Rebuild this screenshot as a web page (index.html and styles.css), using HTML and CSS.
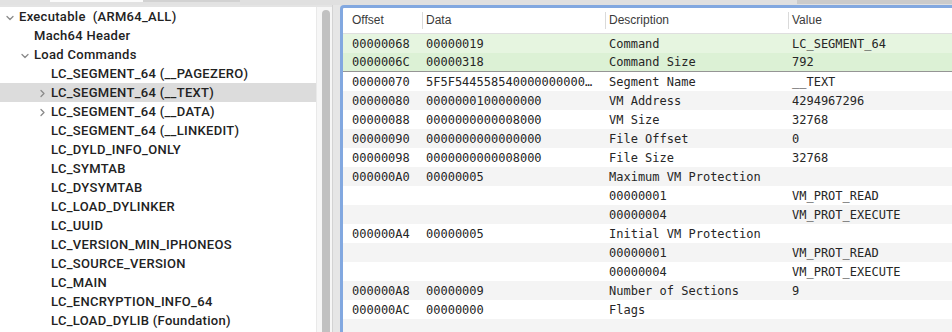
FILE: index.html
```html
<!DOCTYPE html>
<html lang="en">
<head>
<meta charset="utf-8">
<title>MachOView</title>
<link rel="stylesheet" href="styles.css">
</head>
<body>
<div class="window">
  <div class="topstrip">
    <span class="seg seg-a"></span><span class="seg seg-b"></span><span class="seg seg-c"></span><span class="seg seg-d"></span><span class="seg seg-e"></span>
  </div>
  <div class="main">
    <div class="left">
      <div class="tree">
        <div class="node l0"><svg class="chev" viewBox="0 0 13 19"><path d="M1 9.5 L4 12.5 L7 9.5"/></svg><span>Executable&nbsp; (ARM64_ALL)</span></div>
        <div class="node l1"><span class="chev"></span><span>Mach64 Header</span></div>
        <div class="node l1"><svg class="chev" viewBox="0 0 13 19"><path d="M1 9.5 L4 12.5 L7 9.5"/></svg><span>Load Commands</span></div>
        <div class="node l2"><span class="chev"></span><span>LC_SEGMENT_64 (__PAGEZERO)</span></div>
        <div class="node l2 selected"><svg class="chev" viewBox="0 0 13 19"><path d="M3 7.5 L6 10.5 L3 13.5"/></svg><span>LC_SEGMENT_64 (__TEXT)</span></div>
        <div class="node l2"><svg class="chev" viewBox="0 0 13 19"><path d="M3 7.5 L6 10.5 L3 13.5"/></svg><span>LC_SEGMENT_64 (__DATA)</span></div>
        <div class="node l2"><span class="chev"></span><span>LC_SEGMENT_64 (__LINKEDIT)</span></div>
        <div class="node l2"><span class="chev"></span><span>LC_DYLD_INFO_ONLY</span></div>
        <div class="node l2"><span class="chev"></span><span>LC_SYMTAB</span></div>
        <div class="node l2"><span class="chev"></span><span>LC_DYSYMTAB</span></div>
        <div class="node l2"><span class="chev"></span><span>LC_LOAD_DYLINKER</span></div>
        <div class="node l2"><span class="chev"></span><span>LC_UUID</span></div>
        <div class="node l2"><span class="chev"></span><span>LC_VERSION_MIN_IPHONEOS</span></div>
        <div class="node l2"><span class="chev"></span><span>LC_SOURCE_VERSION</span></div>
        <div class="node l2"><span class="chev"></span><span>LC_MAIN</span></div>
        <div class="node l2"><span class="chev"></span><span>LC_ENCRYPTION_INFO_64</span></div>
        <div class="node l2"><span class="chev"></span><span>LC_LOAD_DYLIB (Foundation)</span></div>
      </div>
      <div class="scroll"><div class="thumb"></div></div>
    </div>
    <div class="splitter"></div>
    <div class="right">
      <div class="thead">
        <div class="th c-off">Offset</div>
        <div class="th c-data sep">Data</div>
        <div class="th c-desc sep">Description</div>
        <div class="th c-val sep">Value</div>
      </div>
      <div class="tbody">
        <div class="tr green1"><div class="td c-off">00000068</div><div class="td c-data">00000019</div><div class="td c-desc">Command</div><div class="td c-val">LC_SEGMENT_64</div></div>
        <div class="tr green2"><div class="td c-off">0000006C</div><div class="td c-data">00000318</div><div class="td c-desc">Command Size</div><div class="td c-val">792</div></div>
        <div class="tr"><div class="td c-off">00000070</div><div class="td c-data">5F5F544558540000000000…</div><div class="td c-desc">Segment Name</div><div class="td c-val">__TEXT</div></div>
        <div class="tr alt"><div class="td c-off">00000080</div><div class="td c-data">0000000100000000</div><div class="td c-desc">VM Address</div><div class="td c-val">4294967296</div></div>
        <div class="tr"><div class="td c-off">00000088</div><div class="td c-data">0000000000008000</div><div class="td c-desc">VM Size</div><div class="td c-val">32768</div></div>
        <div class="tr alt"><div class="td c-off">00000090</div><div class="td c-data">0000000000000000</div><div class="td c-desc">File Offset</div><div class="td c-val">0</div></div>
        <div class="tr"><div class="td c-off">00000098</div><div class="td c-data">0000000000008000</div><div class="td c-desc">File Size</div><div class="td c-val">32768</div></div>
        <div class="tr alt"><div class="td c-off">000000A0</div><div class="td c-data">00000005</div><div class="td c-desc">Maximum VM Protection</div><div class="td c-val"></div></div>
        <div class="tr"><div class="td c-off"></div><div class="td c-data"></div><div class="td c-desc">00000001</div><div class="td c-val">VM_PROT_READ</div></div>
        <div class="tr alt"><div class="td c-off"></div><div class="td c-data"></div><div class="td c-desc">00000004</div><div class="td c-val">VM_PROT_EXECUTE</div></div>
        <div class="tr"><div class="td c-off">000000A4</div><div class="td c-data">00000005</div><div class="td c-desc">Initial VM Protection</div><div class="td c-val"></div></div>
        <div class="tr alt"><div class="td c-off"></div><div class="td c-data"></div><div class="td c-desc">00000001</div><div class="td c-val">VM_PROT_READ</div></div>
        <div class="tr"><div class="td c-off"></div><div class="td c-data"></div><div class="td c-desc">00000004</div><div class="td c-val">VM_PROT_EXECUTE</div></div>
        <div class="tr alt"><div class="td c-off">000000A8</div><div class="td c-data">00000009</div><div class="td c-desc">Number of Sections</div><div class="td c-val">9</div></div>
        <div class="tr"><div class="td c-off">000000AC</div><div class="td c-data">00000000</div><div class="td c-desc">Flags</div><div class="td c-val"></div></div>
        <div class="tr alt"><div class="td c-off"></div><div class="td c-data"></div><div class="td c-desc"></div><div class="td c-val"></div></div>
      </div>
    </div>
  </div>
</div>
</body>
</html>
```

FILE: styles.css
```css
html, body {
  margin: 0;
  padding: 0;
}
body {
  width: 952px;
  height: 332px;
  overflow: hidden;
  background: #e4e4e4;
  font-family: "Liberation Sans", Arial, sans-serif;
}
.window {
  display: flex;
  flex-direction: column;
  height: 332px;
}
.topstrip {
  height: 5px;
  display: flex;
  flex: none;
}
.seg { display: block; height: 5px; }
.seg-a { width: 50px; background: #e2e2e2; }
.seg-b { width: 93px; background: linear-gradient(#fbfbfb 0 2px, #e2e2e2 2px); }
.seg-c { width: 97px; background: linear-gradient(#d2d2d2 0 2px, #e2e2e2 2px); }
.seg-d { width: 557px; background: #e0e0e0; }
.seg-e { flex: 1; background: linear-gradient(#cbcbcb 0 4px, #e0e0e0 4px); }

.main {
  flex: 1;
  display: flex;
  min-height: 0;
}
.left {
  margin-top: 2px;
  display: flex;
  flex: none;
}
.tree {
  width: 316px;
  background: #ffffff;
}
.node {
  height: 19px;
  display: flex;
  align-items: center;
  font-family: Roboto, "Liberation Sans", sans-serif;
  font-weight: 500;
  font-size: 13px;
  letter-spacing: 0.3px;
  color: #222222;
  white-space: nowrap;
}
.node.selected { background: #dcdcdc; }
.chev {
  width: 13px;
  height: 19px;
  flex: none;
  display: block;
}
.chev path {
  fill: none;
  stroke: #8a8a8a;
  stroke-width: 1.3;
  stroke-linecap: round;
  stroke-linejoin: round;
}
.l0 { padding-left: 6px; }
.l1 { padding-left: 21px; }
.l2 { padding-left: 38px; }

.scroll {
  width: 16px;
  background: #f6f6f6;
  border-left: 1px solid #e9e9e9;
  padding: 3px 3px 0 5px;
  box-sizing: border-box;
  flex: none;
}
.thumb {
  width: 8px;
  height: 100%;
  background: #c1c1c1;
  border-radius: 4px 4px 0 0;
}
.splitter {
  width: 7px;
  flex: none;
  border-left: 1px solid #d3d3d3;
  background: #e6e6e6;
}
.right {
  flex: 1;
  background: #ffffff;
  border-top: 3px solid #82a8e0;
  border-left: 3px solid #82a8e0;
  border-top-left-radius: 4px;
  overflow: hidden;
}
.thead, .tr {
  display: grid;
  grid-template-columns: 79px 183px 183px 1fr;
}
.thead {
  height: 26px;
  box-sizing: border-box;
  border-bottom: 1px solid #dfdfdf;
  align-items: center;
}
.th {
  font-size: 12px;
  color: #3a3a3a;
  height: 17px;
  line-height: 17px;
  box-sizing: border-box;
}
.th.sep { border-left: 1px solid #dadada; }
.th.c-off { padding-left: 9px; }
.th.c-data, .th.c-desc, .th.c-val { padding-left: 3px; }

.tr {
  height: 19px;
  box-sizing: border-box;
  align-items: center;
}
.tr.alt { background: #f4f4f4; }
.tr.green1 { background: #e6f5e0; }
.tr.green2 { background: #dcf1d5; border-bottom: 1px solid #959595; }
.td {
  font-family: "DejaVu Sans Mono", "Liberation Mono", monospace;
  font-size: 12px;
  color: #262626;
  white-space: nowrap;
  min-width: 0;
}
.td.c-off { padding-left: 9px; }
.td.c-data { padding-left: 4px; }
.td.c-desc { padding-left: 4px; }
.td.c-val { padding-left: 4px; }
```
